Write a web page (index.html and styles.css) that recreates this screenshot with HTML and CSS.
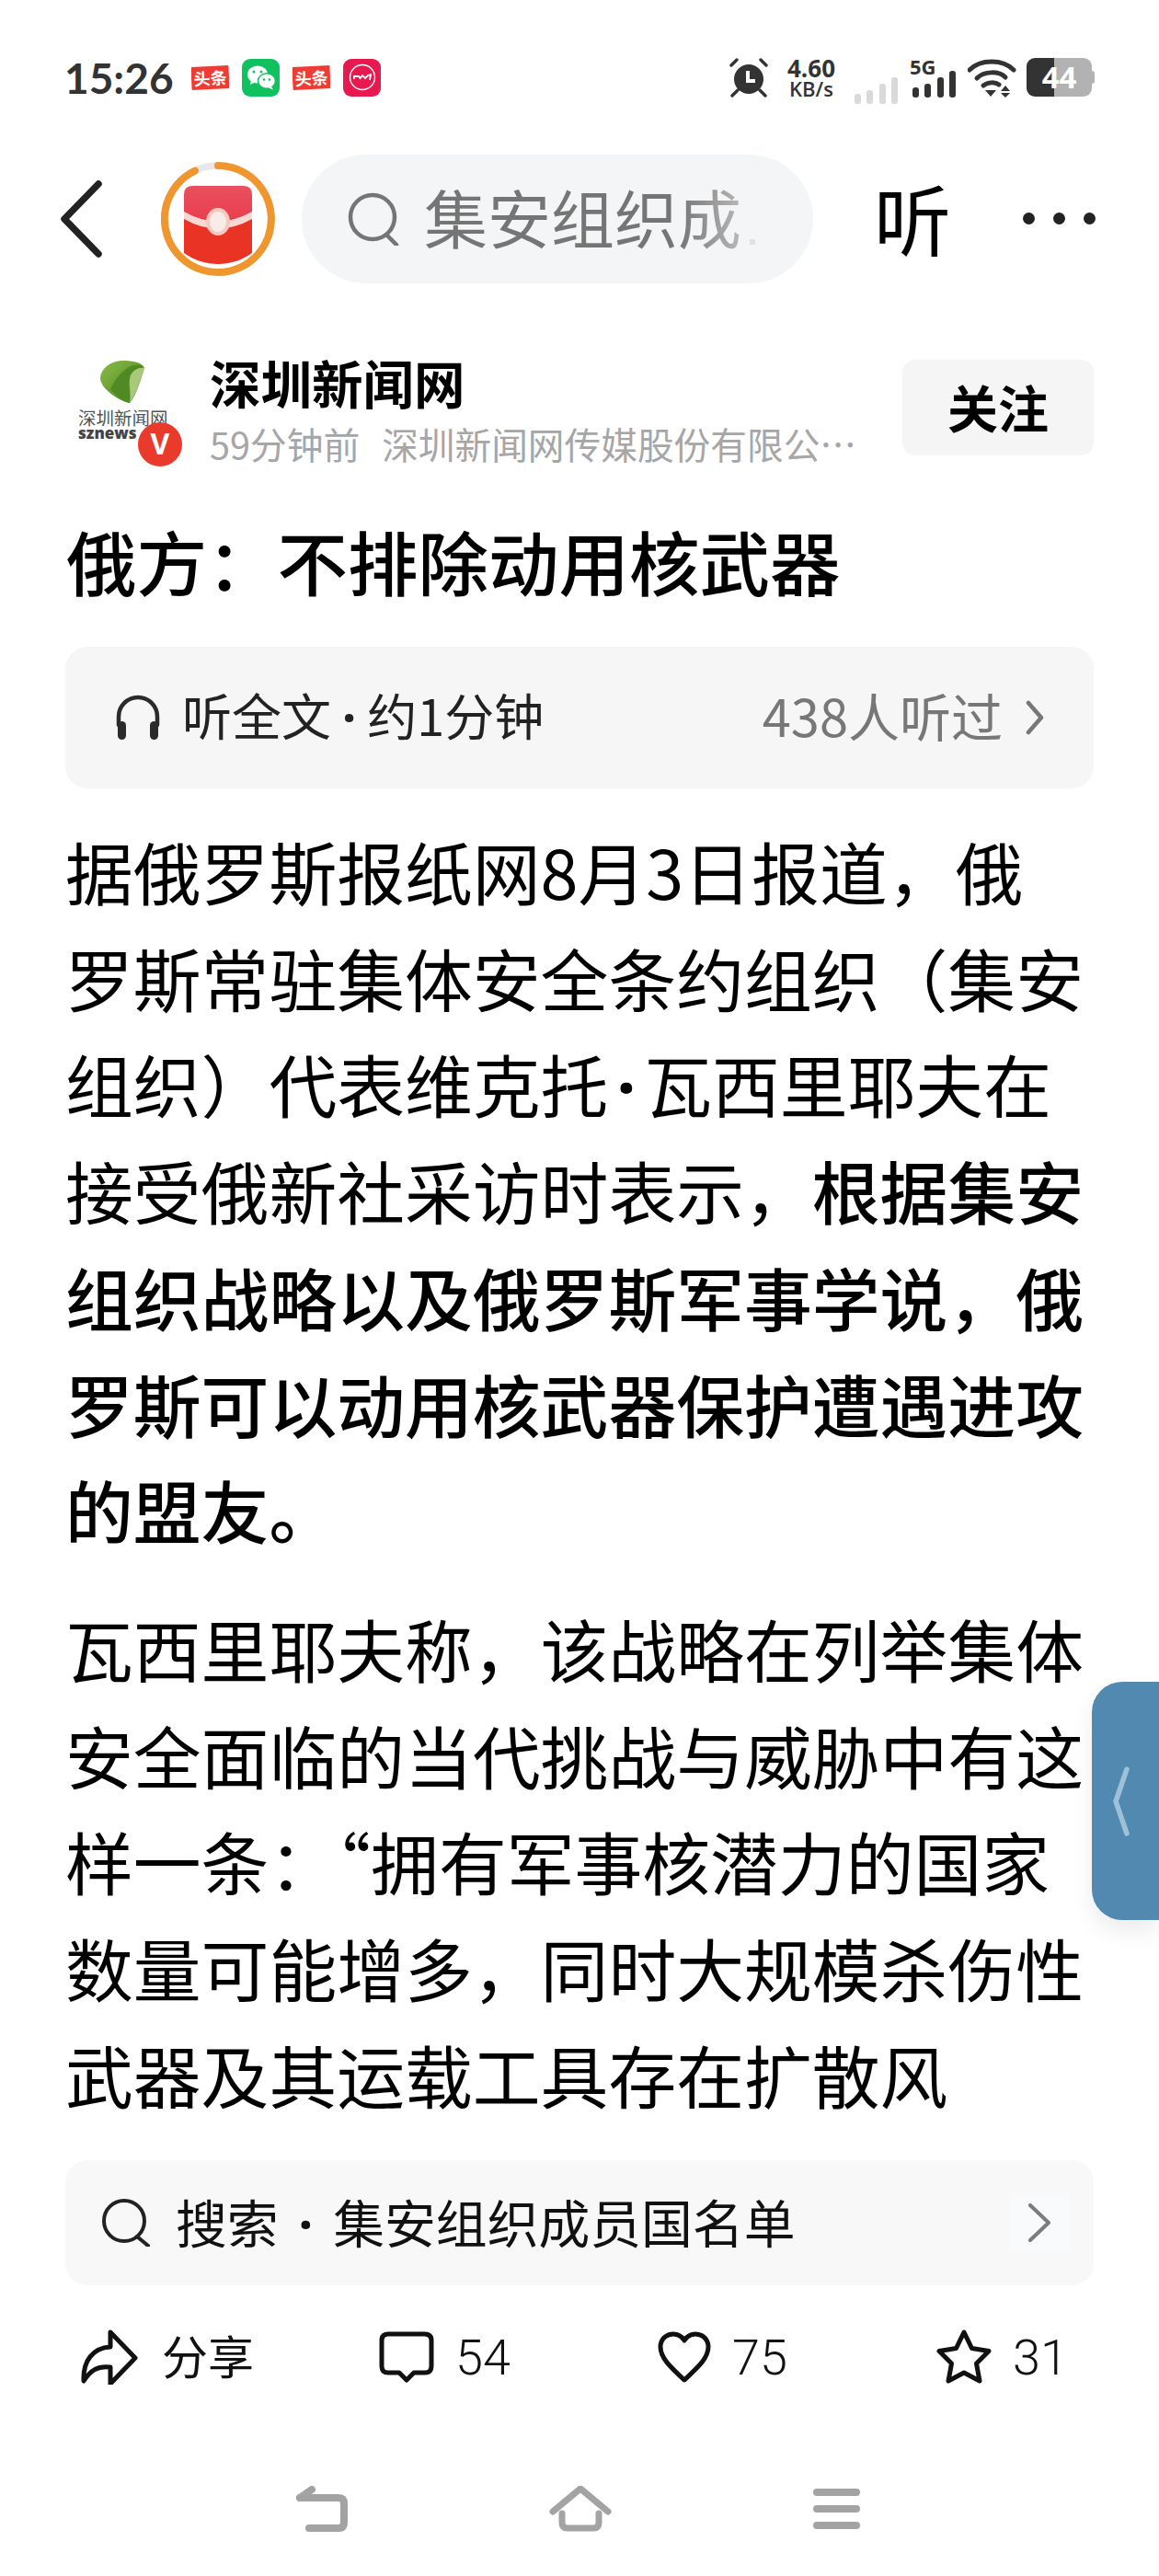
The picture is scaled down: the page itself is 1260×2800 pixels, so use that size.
FILE: index.html
```html
<!DOCTYPE html>
<html lang="zh-CN">
<head>
    <meta charset="UTF-8">
    <meta name="viewport" content="width=device-width, initial-scale=1.0">
    <title>俄方：不排除动用核武器</title>
    <link rel="stylesheet" href="styles.css">
</head>
<body>
<div class="page">
    <!-- status bar -->
    <div class="status">
        <span class="time">15:26</span>
        <div class="notify-icons">
            <div class="app-icon toutiao"><span class="toutiao-band">头条</span></div>
            <div class="app-icon wechat">
                <svg viewBox="0 0 40 40" width="40" height="40">
                    <ellipse cx="16" cy="17" rx="11" ry="9.5" fill="#fff"/>
                    <path d="M9 23l-1 5 6-3z" fill="#fff"/>
                    <ellipse cx="26" cy="24" rx="9.5" ry="8.2" fill="#fff" stroke="#0fc15f" stroke-width="1.5"/>
                    <path d="M31 30l2 3.5-5-2z" fill="#fff"/>
                    <circle cx="12" cy="14" r="1.5" fill="#0fc15f"/>
                    <circle cx="20" cy="14" r="1.5" fill="#0fc15f"/>
                    <circle cx="23" cy="22.5" r="1.3" fill="#0fc15f"/>
                    <circle cx="29" cy="22.5" r="1.3" fill="#0fc15f"/>
                </svg>
            </div>
            <div class="app-icon toutiao"><span class="toutiao-band">头条</span></div>
            <div class="app-icon rose">
                <svg viewBox="0 0 40 40" width="40" height="40" fill="none" stroke="#fff">
                    <circle cx="20" cy="20" r="13.5" stroke-width="1.4"/>
                    <path d="M11 22v-3h5l1.5 2 2.5-3 3 3 3-3 3-1-1 6" stroke-width="1.8"/>
                </svg>
            </div>
        </div>
        <div class="status-right">
            <svg class="alarm" viewBox="0 0 42 43" width="42" height="43">
                <circle cx="21" cy="23" r="16" fill="#333"/>
                <path d="M20 14v11h8" fill="none" stroke="#fff" stroke-width="4"/>
                <path d="M2 8l6-6M40 8l-6-6M9 35l-6 6M33 35l6 6" stroke="#333" stroke-width="3.4" stroke-linecap="round"/>
            </svg>
            <div class="speed"><span>4.60</span><span class="speed-unit">KB/s</span></div>
            <svg class="bars-off" viewBox="0 0 47 29" width="47" height="29" fill="#d9d9d9">
                <rect x="0" y="18" width="7" height="11" rx="3"/>
                <rect x="13" y="14" width="7" height="15" rx="3"/>
                <rect x="27" y="7" width="7" height="22" rx="3"/>
                <rect x="40" y="0" width="7" height="29" rx="3"/>
            </svg>
            <div class="signal">
                <span class="five-g">5G</span>
                <svg viewBox="0 0 47 29" width="47" height="29" fill="#333">
                    <rect x="0" y="18" width="7" height="11" rx="3"/>
                    <rect x="13" y="14" width="7" height="15" rx="3"/>
                    <rect x="27" y="7" width="7" height="22" rx="3"/>
                    <rect x="40" y="0" width="7" height="29" rx="3"/>
                </svg>
            </div>
            <svg class="wifi" viewBox="0 0 53 43" width="53" height="43">
                <g fill="none" stroke="#333" stroke-width="5" stroke-linecap="round">
                    <path d="M2 13C14 1 38 1 50 13"/>
                    <path d="M10 22C18 14 34 14 41 21"/>
                    <path d="M17 30C22 26 30 26 34 29"/>
                </g>
                <path d="M19 35h12l-6 7z" fill="#333"/>
                <path d="M41 30l5 6h-10zM36 38h10l-5 5z" fill="#333"/>
            </svg>
            <div class="battery">
                <div class="battery-body"><span class="battery-num">44</span></div>
                <div class="battery-nub"></div>
            </div>
        </div>
    </div>

    <!-- top nav -->
    <div class="nav">
        <svg class="back" viewBox="0 0 47 86" width="47" height="86">
            <path d="M42 5L5 43l37 38" fill="none" stroke="#222" stroke-width="7.5" stroke-linecap="round" stroke-linejoin="round"/>
        </svg>
        <svg class="packet" viewBox="0 0 124 126" width="124" height="126">
            <defs>
                <linearGradient id="flap" x1="0" y1="0" x2="0" y2="1">
                    <stop offset="0" stop-color="#e9505f"/>
                    <stop offset="1" stop-color="#ea3a48"/>
                </linearGradient>
            </defs>
            <circle cx="62" cy="63" r="58" fill="none" stroke="#e8e8e8" stroke-width="7.5"/>
            <path d="M62 5A58 58 0 1 1 37 10.6" fill="none" stroke="#f0962f" stroke-width="8" stroke-linecap="round"/>
            <path d="M25 44V36Q25 27 35 27H89Q99 27 99 36V44L99 74H25Z" fill="url(#flap)"/>
            <path d="M25 62H99V100C88 108 75 112 62 112S36 108 25 100Z" fill="#e93325"/>
            <path d="M25 55Q62 76 99 55V63Q62 84 25 63Z" fill="#f6d8d4"/>
            <ellipse cx="62" cy="66" rx="13" ry="15" fill="#f3c9c2"/>
            <ellipse cx="62" cy="66" rx="9" ry="11" fill="#f8ece8"/>
        </svg>
        <div class="search-pill">
            <svg viewBox="0 0 56 58" width="56" height="58" fill="none" stroke="#757575" stroke-width="4.5" stroke-linecap="round">
                <circle cx="27" cy="27" r="24"/>
                <path d="M42 46l11 11"/>
            </svg>
            <span class="pill-text">集安组织成</span>
            <span class="pill-dot"></span>
        </div>
        <span class="listen">听</span>
        <div class="more"><i></i><i></i><i></i></div>
    </div>

    <!-- source row -->
    <div class="author">
        <div class="logo">
            <svg class="leaf" viewBox="0 0 50 50" width="50" height="50">
                <defs>
                    <linearGradient id="leafFill" x1="0" y1="0" x2="1" y2="1">
                        <stop offset="0" stop-color="#8dbb4a"/>
                        <stop offset="0.6" stop-color="#5f9a2c"/>
                        <stop offset="1" stop-color="#3f7a1c"/>
                    </linearGradient>
                </defs>
                <path d="M1 20C2 8 14 1 26 1 36 1 47 3 49 9 46 18 40 40 33 47 24 46 1 32 1 20Z" fill="url(#leafFill)"/>
                <path d="M12 32C18 20 26 9 37 6 43 5 47 6 49 9 43 8 37 11 34 17 31 23 33 32 33 47 24 44 17 38 12 32Z" fill="#4f8a24"/>
                <path d="M34 17C37 11 43 8 49 9 46 18 40 38 33 47 35 36 31 24 34 17Z" fill="#a9c97a"/>
            </svg>
            <span class="logo-cn">深圳新闻网</span>
            <span class="logo-en">sznews</span>
            <span class="badge-v">V</span>
        </div>
        <div class="author-info">
            <div class="author-name">深圳新闻网</div>
            <div class="author-meta"><span class="meta-time">59分钟前</span>深圳新闻网传媒股份有限公…</div>
        </div>
        <div class="follow">关注</div>
    </div>

    <h1 class="title">俄方：不排除动用核武器</h1>

    <div class="listen-bar">
        <svg viewBox="0 0 50 52" width="50" height="52" fill="none" stroke="#2b2b2b" stroke-width="4.5" stroke-linecap="round">
            <path d="M4 34V25a21 21 0 0 1 42 0v9"/>
            <rect x="3" y="30" width="9" height="20" rx="4.5" fill="#2b2b2b" stroke="none"/>
            <rect x="38" y="30" width="9" height="20" rx="4.5" fill="#2b2b2b" stroke="none"/>
        </svg>
        <span class="listen-label">听全文<span class="label-dot">·</span>约1分钟</span>
        <span class="listen-count">438人听过</span>
        <svg class="chev" viewBox="0 0 20 40" width="20" height="40" fill="none" stroke="#777" stroke-width="4.5" stroke-linecap="round" stroke-linejoin="round">
            <path d="M3 4l14 16L3 36"/>
        </svg>
    </div>

    <div class="article">
        <p>据俄罗斯报纸网8月3日报道，俄罗斯常驻集体安全条约组织（集安组织）代表维克托<span class="mid-dot">·</span>瓦西里耶夫在接受俄新社采访时表示，<b>根据集安组织战略以及俄罗斯军事学说，俄罗斯可以动用核武器保护遭遇进攻的盟友。</b></p>
        <p>瓦西里耶夫称，该战略在列举集体安全面临的当代挑战与威胁中有这样一条：“拥有军事核潜力的国家数量可能增多，同时大规模杀伤性武器及其运载工具存在扩散风</p>
    </div>

    <div class="search-bar">
        <svg viewBox="0 0 52 52" width="52" height="52" fill="none" stroke="#222" stroke-width="4" stroke-linecap="round">
            <circle cx="24" cy="24" r="22"/>
            <path d="M38 41l12 10"/>
        </svg>
        <span class="search-text">搜索<span class="search-dot">·</span>集安组织成员国名单</span>
        <div class="search-chev">
            <svg viewBox="0 0 24 42" width="24" height="42" fill="none" stroke="#7c7c7c" stroke-width="4" stroke-linecap="round" stroke-linejoin="round">
                <path d="M2 2l20 19L2 40"/>
            </svg>
        </div>
    </div>

    <div class="actions">
        <div class="action action-share">
            <svg viewBox="0 0 62 60" width="62" height="60" fill="none" stroke="#111" stroke-width="5" stroke-linejoin="round" stroke-linecap="round">
                <path d="M3 56C2 34 13 20 32 19V3l27 28-27 28V41C18 39 10 45 3 56Z"/>
            </svg>
            <span class="share-text">分享</span>
        </div>
        <div class="action action-comment">
            <svg viewBox="0 0 60 56" width="60" height="56" fill="none" stroke="#111" stroke-width="5" stroke-linejoin="round">
                <path d="M10 3H50Q57 3 57 10V38Q57 45 50 45H38L30 53 22 45H10Q3 45 3 38V10Q3 3 10 3Z"/>
            </svg>
            <span class="num">54</span>
        </div>
        <div class="action action-like">
            <svg viewBox="0 0 58 56" width="58" height="56" fill="none" stroke="#111" stroke-width="5" stroke-linejoin="round">
                <path d="M29 53C14 39 3 29 3 17 3 8 10 3 17 3 22 3 26 5 29 10 32 5 36 3 41 3 48 3 55 8 55 17 55 29 44 39 29 53Z"/>
            </svg>
            <span class="num">75</span>
        </div>
        <div class="action action-star">
            <svg viewBox="0 0 60 60" width="60" height="60" fill="none" stroke="#111" stroke-width="5" stroke-linejoin="round">
                <path d="M30 3l8.500 17.500L57 23.500 43.500 37 47 56 30 47 13 56l3.500-19L3 23.500l18.500-3z"/>
            </svg>
            <span class="num">31</span>
        </div>
    </div>

    <div class="sys-nav">
        <svg viewBox="0 0 56 50" width="56" height="50" fill="none" stroke="#a3a3a3" stroke-width="8" stroke-linecap="round" stroke-linejoin="round">
            <path d="M4 13H46Q52 13 52 19V40Q52 46 46 46H14"/>
            <path d="M4 13L17 4"/>
        </svg>
        <svg viewBox="0 0 68 50" width="68" height="50" fill="none" stroke="#a3a3a3" stroke-width="7" stroke-linecap="round" stroke-linejoin="round">
            <path d="M4 28L34 3l30 25"/>
            <path d="M14 30V40Q14 46 20 46H48Q54 46 54 40V30"/>
        </svg>
        <div class="sys-menu"><i></i><i></i><i></i></div>
    </div>

    <!-- floating side tab -->
    <div class="side-tab">
        <svg viewBox="0 0 20 76" width="20" height="76" fill="none" stroke="#9ec1d8" stroke-width="5.500" stroke-linecap="round" stroke-linejoin="round">
            <path d="M16 3L4 38l12 35"/>
        </svg>
    </div>
</div>
</body>
</html>
```

FILE: styles.css
```css
* {
    box-sizing: border-box;
}

body {
    margin: 0;
    background: #ffffff;
    font-family: "Noto Sans CJK SC", "Noto Sans", sans-serif;
    color: #111111;
}

.page {
    position: relative;
    width: 1260px;
    height: 2800px;
    overflow: hidden;
}

/* status bar */
.status {
    display: flex;
    align-items: center;
    height: 168px;
    padding: 0 70px;
}

.time {
    width: 138px;
    font-family: "Lato", sans-serif;
    font-size: 46px;
    font-weight: 700;
    color: #333333;
}

.notify-icons {
    display: flex;
    gap: 14px;
}

.app-icon {
    display: flex;
    align-items: center;
    justify-content: center;
    width: 41px;
    height: 41px;
    border-radius: 9px;
    overflow: hidden;
}

.toutiao {
    background: #fefefe;
}

.toutiao-band {
    width: 41px;
    height: 25px;
    background: #ee3c35;
    color: #ffffff;
    font-size: 18px;
    font-weight: 700;
    line-height: 25px;
    text-align: center;
    transform: rotate(-3deg);
}

.wechat {
    background: #0fc15f;
}

.rose {
    background: #e8194f;
}

.status-right {
    display: flex;
    align-items: center;
    margin-left: auto;
}

.speed {
    display: flex;
    flex-direction: column;
    align-items: center;
    width: 54px;
    margin-left: 20px;
    font-family: "Open Sans", sans-serif;
    font-size: 26px;
    font-weight: 700;
    line-height: 24px;
    color: #333333;
}

.speed-unit {
    font-size: 22px;
    font-weight: 600;
    line-height: 20px;
}

.bars-off {
    margin: 29px 0 0 20px;
}

.signal {
    display: flex;
    flex-direction: column;
    width: 47px;
    height: 43px;
    margin-left: 16px;
    position: relative;
}

.signal svg {
    position: absolute;
    left: 0;
    top: 14px;
}

.five-g {
    margin-left: -3px;
    font-family: "Open Sans", sans-serif;
    font-size: 22px;
    font-weight: 700;
    line-height: 18px;
    color: #333333;
}

.wifi {
    margin-left: 13px;
}

.battery {
    display: flex;
    align-items: center;
    margin-left: 11px;
}

.battery-body {
    width: 71px;
    height: 42px;
    border-radius: 9px;
    background: linear-gradient(to right, #333333 30px, #b2b2b2 30px);
    text-align: center;
}

.battery-num {
    font-family: "Open Sans", sans-serif;
    font-size: 33px;
    font-weight: 700;
    line-height: 42px;
    color: #ffffff;
}

.battery-nub {
    width: 3px;
    height: 14px;
    border-radius: 0 3px 3px 0;
    background: #b2b2b2;
}

/* top nav */
.nav {
    display: flex;
    align-items: center;
    height: 140px;
    padding-left: 65px;
}

.packet {
    margin-left: 63px;
}

.search-pill {
    display: flex;
    align-items: center;
    width: 556px;
    height: 140px;
    margin-left: 29px;
    padding-left: 50px;
    border-radius: 70px;
    background: #f4f5f6;
}

.pill-text {
    margin: 0 0 7px 27px;
    font-size: 69px;
    line-height: 80px;
    background: linear-gradient(to right, #757575 80%, #b8b8b8 100%);
    -webkit-background-clip: text;
    background-clip: text;
    color: transparent;
}

.pill-dot {
    width: 6px;
    height: 6px;
    margin: 50px 0 0 9px;
    background: #e2e2e2;
}

.listen {
    margin: 0 0 4px 66px;
    font-size: 84px;
    line-height: 90px;
    color: #000000;
}

.more {
    display: flex;
    gap: 20px;
    margin: 0 0 2px 78px;
}

.more i {
    width: 13px;
    height: 13px;
    border-radius: 50%;
    background: #222222;
}

/* source row */
.author {
    display: flex;
    align-items: flex-start;
    height: 112px;
    margin-top: 80px;
    padding: 0 71px 0 85px;
}

.logo {
    position: relative;
    display: flex;
    flex-direction: column;
    align-items: flex-start;
    width: 143px;
    height: 112px;
}

.leaf {
    margin: 3px 0 0 23px;
}

.logo-cn {
    margin-top: 3px;
    font-size: 19.500px;
    line-height: 20px;
    color: #555555;
}

.logo-en {
    margin-top: -2px;
    font-family: "Open Sans", sans-serif;
    font-size: 17px;
    font-weight: 800;
    line-height: 18px;
    color: #444444;
}

.badge-v {
    position: absolute;
    left: 65px;
    top: 71px;
    width: 48px;
    height: 48px;
    border-radius: 50%;
    background: #e93a2b;
    color: #ffffff;
    font-family: "Open Sans", sans-serif;
    font-size: 32px;
    font-weight: 700;
    line-height: 46px;
    text-align: center;
}

.author-info {
    flex: 1;
}

.author-name {
    margin-top: -1px;
    font-size: 55.500px;
    font-weight: 700;
    line-height: 56px;
    color: #000000;
}

.author-meta {
    margin-top: 17px;
    font-size: 39.700px;
    line-height: 44px;
    color: #a6a6a6;
    white-space: nowrap;
}

.meta-time {
    margin-right: 24px;
}

.follow {
    width: 208px;
    height: 104px;
    margin-top: 3px;
    border-radius: 14px;
    background: #f5f5f5;
    color: #000000;
    font-size: 55px;
    font-weight: 700;
    line-height: 100px;
    text-align: center;
}

.title {
    margin: 59px 0 0;
    padding-left: 72px;
    font-size: 76.500px;
    font-weight: 500;
    line-height: 100px;
    color: #000000;
}

/* listen bar */
.listen-bar {
    display: flex;
    align-items: center;
    height: 154px;
    margin: 44px 71px 0;
    padding: 0 54px;
    border-radius: 24px;
    background: #f6f6f6;
}

.listen-label {
    margin: 0 0 8px 23px;
    font-size: 54px;
    color: #222222;
}

.label-dot {
    margin: 0 12px;
    font-family: "Noto Sans", sans-serif;
    font-weight: 700;
    line-height: 0;
}

.listen-count {
    margin: 0 0 8px auto;
    font-size: 56px;
    color: #777777;
}

.chev {
    margin-left: 25px;
}

/* article */
.article {
    height: 1460px;
    margin-top: 31px;
    padding: 0 74px 0 71px;
    font-size: 73.800px;
    line-height: 115.700px;
    color: #000000;
}

.article p {
    margin: 0 0 35px;
}

.article b {
    font-weight: 500;
}

.mid-dot {
    margin: 0 9px;
    font-family: "Noto Sans", sans-serif;
    font-weight: 700;
    line-height: 0;
}

/* related search */
.search-bar {
    display: flex;
    align-items: center;
    height: 136px;
    margin: 0 71px;
    padding-left: 40px;
    border-radius: 24px;
    background: #f8f8f8;
}

.search-text {
    margin: 0 0 6px 28px;
    font-size: 55.800px;
    color: #111111;
}

.search-dot {
    margin: 0 22px;
    font-family: "Noto Sans", sans-serif;
    font-weight: 700;
    line-height: 0;
}

.search-chev {
    display: flex;
    align-items: center;
    justify-content: center;
    width: 64px;
    height: 62px;
    margin-left: auto;
    margin-right: 27px;
    background: #f9fafb;
}

/* action row */
.actions {
    display: flex;
    align-items: center;
    height: 96px;
    margin-top: 30px;
    padding-left: 88px;
}

.action {
    display: flex;
    align-items: center;
    font-family: "Roboto", "Noto Sans CJK SC", sans-serif;
    font-size: 50px;
}

.action span {
    margin-left: 26px;
    color: #111111;
}

.action .share-text {
    padding-bottom: 7px;
}

.action .num {
    margin-left: 23px;
    font-size: 54px;
    font-weight: 300;
}

.action-share {
    width: 324px;
}

.action-comment {
    width: 303px;
}

.action-like {
    width: 303px;
}

/* system nav */
.sys-nav {
    display: flex;
    align-items: center;
    gap: 219px;
    height: 50px;
    margin-top: 92px;
    padding-left: 322px;
}

.sys-menu {
    display: flex;
    flex-direction: column;
    gap: 10px;
}

.sys-menu i {
    display: block;
    width: 51px;
    height: 8px;
    border-radius: 4px;
    background: #a3a3a3;
}

/* floating tab over the article */
.side-tab {
    position: absolute;
    left: 1187px;
    top: 1828px;
    display: flex;
    align-items: center;
    width: 73px;
    height: 259px;
    padding-left: 22px;
    border-radius: 33px 0 0 33px;
    background: #5289b0;
    box-shadow: 0 12px 24px rgba(0, 0, 0, 0.08);
}
```
